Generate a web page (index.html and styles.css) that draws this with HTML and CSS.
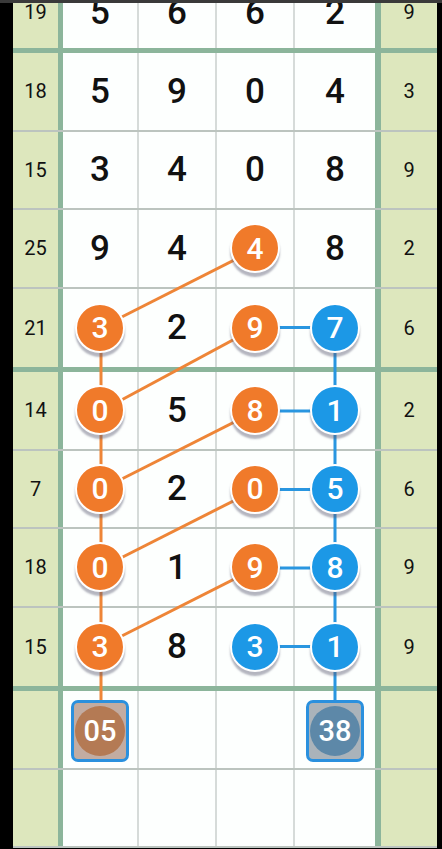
FILE: index.html
```html
<!DOCTYPE html>
<html lang="en">
<head>
  <meta charset="UTF-8">
  <meta name="viewport" content="width=device-width, initial-scale=1.0">
  <title>Trend Chart</title>
  <link rel="stylesheet" href="styles.css">
</head>
<body>

  <div class="topbar"></div>

  <div class="board">

    <!-- connecting lines, drawn under the balls -->
    <svg class="lines" width="424" height="880">
      <g stroke="#ee8537" stroke-width="3">
        <line x1="243" y1="279" x2="88" y2="357.5" />
        <line x1="243" y1="357.5" x2="88" y2="441" />
        <line x1="243" y1="441" x2="88" y2="519.5" />
        <line x1="243" y1="519.5" x2="88" y2="598" />
        <line x1="243" y1="598" x2="88" y2="676.5" />
        <line x1="88" y1="357.5" x2="88" y2="740" />
      </g>
      <g stroke="#2996e0" stroke-width="3">
        <line x1="243" y1="357.5" x2="322" y2="357.5" />
        <line x1="243" y1="441" x2="322" y2="441" />
        <line x1="243" y1="519.5" x2="322" y2="519.5" />
        <line x1="243" y1="598" x2="322" y2="598" />
        <line x1="243" y1="676.5" x2="322" y2="676.5" />
        <line x1="322" y1="357.5" x2="322" y2="740" />
      </g>
    </svg>

    <div class="group first">
      <div class="row">
        <div class="lead">19</div>
        <div class="cell">5</div>
        <div class="cell">6</div>
        <div class="cell">6</div>
        <div class="cell">2</div>
        <div class="tail">9</div>
      </div>
    </div>

    <div class="group">
      <div class="row">
        <div class="lead">18</div>
        <div class="cell">5</div>
        <div class="cell">9</div>
        <div class="cell">0</div>
        <div class="cell">4</div>
        <div class="tail">3</div>
      </div>
      <div class="row">
        <div class="lead">15</div>
        <div class="cell">3</div>
        <div class="cell">4</div>
        <div class="cell">0</div>
        <div class="cell">8</div>
        <div class="tail">9</div>
      </div>
      <div class="row">
        <div class="lead">25</div>
        <div class="cell">9</div>
        <div class="cell">4</div>
        <div class="cell"><span class="ball orange">4</span></div>
        <div class="cell">8</div>
        <div class="tail">2</div>
      </div>
      <div class="row">
        <div class="lead">21</div>
        <div class="cell"><span class="ball orange">3</span></div>
        <div class="cell">2</div>
        <div class="cell"><span class="ball orange">9</span></div>
        <div class="cell"><span class="ball blue">7</span></div>
        <div class="tail">6</div>
      </div>
    </div>

    <div class="group">
      <div class="row">
        <div class="lead">14</div>
        <div class="cell"><span class="ball orange">0</span></div>
        <div class="cell">5</div>
        <div class="cell"><span class="ball orange">8</span></div>
        <div class="cell"><span class="ball blue">1</span></div>
        <div class="tail">2</div>
      </div>
      <div class="row">
        <div class="lead">7</div>
        <div class="cell"><span class="ball orange">0</span></div>
        <div class="cell">2</div>
        <div class="cell"><span class="ball orange">0</span></div>
        <div class="cell"><span class="ball blue">5</span></div>
        <div class="tail">6</div>
      </div>
      <div class="row">
        <div class="lead">18</div>
        <div class="cell"><span class="ball orange">0</span></div>
        <div class="cell">1</div>
        <div class="cell"><span class="ball orange">9</span></div>
        <div class="cell"><span class="ball blue">8</span></div>
        <div class="tail">9</div>
      </div>
      <div class="row">
        <div class="lead">15</div>
        <div class="cell"><span class="ball orange">3</span></div>
        <div class="cell">8</div>
        <div class="cell"><span class="ball blue">3</span></div>
        <div class="cell"><span class="ball blue">1</span></div>
        <div class="tail">9</div>
      </div>
    </div>

    <div class="group">
      <div class="row">
        <div class="lead"></div>
        <div class="cell"><span class="pick brown"><span>05</span></span></div>
        <div class="cell"></div>
        <div class="cell"></div>
        <div class="cell"><span class="pick steel"><span>38</span></span></div>
        <div class="tail"></div>
      </div>
      <div class="row">
        <div class="lead"></div>
        <div class="cell"></div>
        <div class="cell"></div>
        <div class="cell"></div>
        <div class="cell"></div>
        <div class="tail"></div>
      </div>
    </div>

  </div>

</body>
</html>
```

FILE: styles.css
```css
* {
  margin: 0;
  padding: 0;
  box-sizing: border-box;
}

body {
  background: #000;
  font-family: Roboto, 'Liberation Sans', sans-serif;
  height: 849px;
  overflow: hidden;
  position: relative;
}

.topbar {
  position: absolute;
  top: 0;
  left: 0;
  right: 0;
  height: 3px;
  background: #3a3a3a;
  z-index: 5;
}

/* Chart board */
.board {
  position: relative;
  width: 424px;
  margin-left: 13px;
  margin-top: -30px;
  background: #fdfffe;
}

.lines {
  position: absolute;
  top: 0;
  left: 0;
  z-index: 1;
}

.group {
  border-top: 5px solid #8cb59b;
}

.group.first {
  border-top: none;
}

.row {
  display: flex;
  height: 78.5px;
  border-bottom: 2px solid #bcc4bf;
}

.group.first .row {
  height: 78px;
  padding-top: 6px;
}

.group .row:last-child {
  border-bottom: none;
}

.group:last-child .row:last-child {
  border-bottom: 2px solid #bcc4bf;
}

.lead,
.tail {
  display: flex;
  align-items: center;
  justify-content: center;
  background: #dde7bd;
  font-size: 20px;
  color: #111;
}

.lead {
  width: 50px;
  border-right: 5px solid #8cb59b;
}

.tail {
  width: 62px;
  border-left: 6px solid #8cb59b;
}

.cell {
  display: flex;
  align-items: center;
  justify-content: center;
  width: 78px;
  border-right: 2px solid #d6dbd9;
  font-size: 35px;
  font-weight: 500;
  color: #111;
}

.cell:nth-child(2) {
  width: 76px;
}

.cell:nth-child(5) {
  width: 80px;
  border-right: none;
}

/* Drawn balls */
.ball {
  position: relative;
  z-index: 2;
  display: flex;
  align-items: center;
  justify-content: center;
  width: 50px;
  height: 50px;
  border: 2px solid #fff;
  border-radius: 50%;
  color: #fff;
  font-size: 30px;
  font-weight: 500;
  box-shadow: 0 4px 2px rgba(90, 90, 115, 0.45);
}

.ball.orange {
  background: #f07a2a;
}

.ball.blue {
  background: #1c98e6;
}

/* Picked numbers */
.pick {
  position: relative;
  z-index: 2;
  display: flex;
  align-items: center;
  justify-content: center;
  width: 58px;
  height: 62px;
  border: 3px solid #2a90de;
  border-radius: 7px;
  margin-top: 4px;
}

.pick span {
  display: flex;
  align-items: center;
  justify-content: center;
  width: 50px;
  height: 50px;
  border-radius: 50%;
  color: #fff;
  font-size: 29px;
}

.pick.brown {
  background: #c2aca2;
}

.pick.brown span {
  background: #b47a54;
}

.pick.steel {
  background: #aab3ba;
}

.pick.steel span {
  background: #5d88a8;
}
```
